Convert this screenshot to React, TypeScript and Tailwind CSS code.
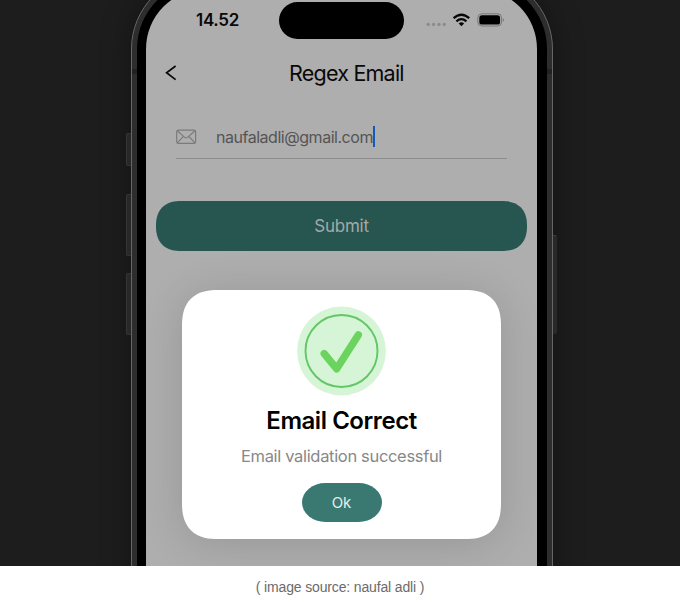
import React from 'react';

function StatusIcons() {
  return (
    <svg className="block h-[20px] w-[82px]" viewBox="425 10 82 20" aria-hidden="true">
      <g fill="#8b8b8b">
        <circle cx="428.2" cy="24.4" r="1.7" />
        <circle cx="433.6" cy="24.4" r="1.7" />
        <circle cx="439" cy="24.4" r="1.7" />
        <circle cx="444.3" cy="24.4" r="1.7" />
      </g>
      <g fill="none" stroke="#080808" strokeWidth="2.3">
        <path d="M453.6 18.2Q461.4 11.3 469.2 18.2" />
        <path d="M456.4 21.3Q461.4 17 466.4 21.3" />
      </g>
      <path d="M458.7 23.4Q461.4 21.2 464.1 23.4L461.4 26.2Z" fill="#080808" />
      <rect x="477.8" y="13.8" width="23.8" height="12.2" rx="4" fill="none" stroke="#777" strokeWidth="1" />
      <rect x="479.3" y="15.3" width="20.8" height="9.3" rx="2.7" fill="#000" />
      <path d="M502.9 18Q505 20 502.9 22Z" fill="#777" />
    </svg>
  );
}

function MailIcon() {
  return (
    <svg className="block h-[16px] w-[22px]" viewBox="0 0 22 16" fill="none" stroke="#7b7b7b" strokeWidth="1.2" aria-hidden="true">
      <rect x="0.7" y="1.2" width="18.9" height="13.2" rx="1.6" />
      <path d="M1.3 1.8L8.7 8.4Q10.1 9.6 11.5 8.4L19 1.8M1.3 13.9L7.4 7.4M19 13.9L12.8 7.4" />
    </svg>
  );
}

function SuccessIcon() {
  return (
    <svg className="block h-[90px] w-[90px]" viewBox="0 0 90 90" fill="none" aria-hidden="true">
      <circle cx="44.5" cy="45" r="44.4" fill="#d6f4d6" />
      <circle cx="44.5" cy="45" r="36" stroke="#62c766" strokeWidth="1.9" />
      <path d="M27.2 47.6L39.7 62.8L61.3 28.9" stroke="#6bd45e" strokeWidth="7.4" strokeLinecap="round" strokeLinejoin="round" />
    </svg>
  );
}

function SuccessDialog() {
  return (
    <section className="absolute top-[290px] left-[182px] flex h-[248.5px] w-[319px] flex-col items-center rounded-[36px] bg-white pt-[16px] shadow-[0_4px_44px_rgba(0,0,0,0.14)] [corner-shape:superellipse(1.3)]">
      <SuccessIcon />
      <h2 className="mt-[9px] text-[24px] leading-[32px] font-semibold tracking-[-0.45px] whitespace-nowrap text-black">Email Correct</h2>
      <p className="mt-[8px] text-[16.5px] leading-[22px] tracking-[-0.33px] whitespace-nowrap text-[#888]">Email validation successful</p>
      <button className="mt-[15.5px] h-[39.5px] w-[80px] rounded-[24px_/_20px] bg-[#397972] pt-[1px] text-[15px] text-[#e4eeec]">Ok</button>
    </section>
  );
}

export default function App() {
  return (
    <main className="h-[597px] w-[680px] overflow-hidden bg-white font-['Inter','Liberation_Sans',sans-serif]">
      <div className="relative h-[566.4px] overflow-hidden bg-[#1d1d1d]">
        <i className="absolute top-[133px] left-[126px] h-[33px] w-[6px] rounded-l-[2px] border-y border-l border-[#3c3c3c] bg-[#303030]" />
        <i className="absolute top-[194px] left-[126px] h-[62px] w-[6px] rounded-l-[2px] border-y border-l border-[#3c3c3c] bg-[#303030]" />
        <i className="absolute top-[273px] left-[126px] h-[62px] w-[6px] rounded-l-[2px] border-y border-l border-[#3c3c3c] bg-[#303030]" />
        <i className="absolute top-[235px] left-[552px] h-[99px] w-[5px] rounded-r-[2px] border-t border-[#484848] bg-[#303030]" />
        <div className="relative -mt-[26px] ml-[131px] h-[700px] w-[422px] rounded-[75px] border border-[#666] bg-[#2d2d2d] px-[5px] pt-[5px] shadow-[0_0_30px_rgba(0,0,0,0.35)]">
          <i className="absolute top-[94px] left-0 h-[5px] w-[5px] bg-[#222]" />
          <i className="absolute top-[94px] right-0 h-[5px] w-[5px] bg-[#222]" />
          <div className="h-[690px] rounded-[69px] bg-black px-[9px] pt-[9px]">
            <div className="h-[675px] w-[391px] rounded-[60px] bg-[#aeaeae] pt-[11px]">
              <header className="flex h-[48px] items-start">
                <span className="ml-[50px] mt-[8px] w-[83px] text-[17px] leading-[24px] font-semibold tracking-[-0.3px] text-[#080808]">14.52</span>
                <span className="mt-[2px] h-[37px] w-[125px] rounded-full bg-black" />
                <span className="ml-[21px] mt-[10px]"><StatusIcons /></span>
              </header>
              <div className="flex h-[50px] items-center pl-[19px]">
                <svg className="h-[18px] w-[13px]" viewBox="0 0 13 18" fill="none" stroke="#090909" strokeWidth="1.7" aria-hidden="true">
                  <path d="M10.6 2L1.6 8.7L10.6 15.6" />
                </svg>
                <h1 className="ml-[111px] text-[21.5px] tracking-[-0.78px] whitespace-nowrap text-[#080808]">Regex Email</h1>
              </div>
              <div className="mx-[30px] mt-[17px] flex h-[44px] w-[331px] items-center border-b border-[#8d8d8d]">
                <MailIcon />
                <span className="ml-[18px] text-[16px] tracking-[-0.47px] whitespace-nowrap text-[#555]">naufaladli@gmail.com</span>
                <i className="h-[21px] w-[2px] bg-[#1757b5]" />
              </div>
              <button className="mt-[42px] ml-[10px] h-[49.5px] w-[371px] rounded-[25px] bg-[#27554f] pt-[2px] text-[17px] tracking-[-0.25px] text-[#a3aaa8] [corner-shape:superellipse(1.25)]">Submit</button>
            </div>
          </div>
        </div>
        <SuccessDialog />
      </div>
      <p className="pt-[11px] text-center font-['Liberation_Sans',sans-serif] text-[14px] leading-[20px] tracking-[-0.15px] whitespace-nowrap text-[#6b6b6b]">( image source: naufal adli )</p>
    </main>
  );
}
